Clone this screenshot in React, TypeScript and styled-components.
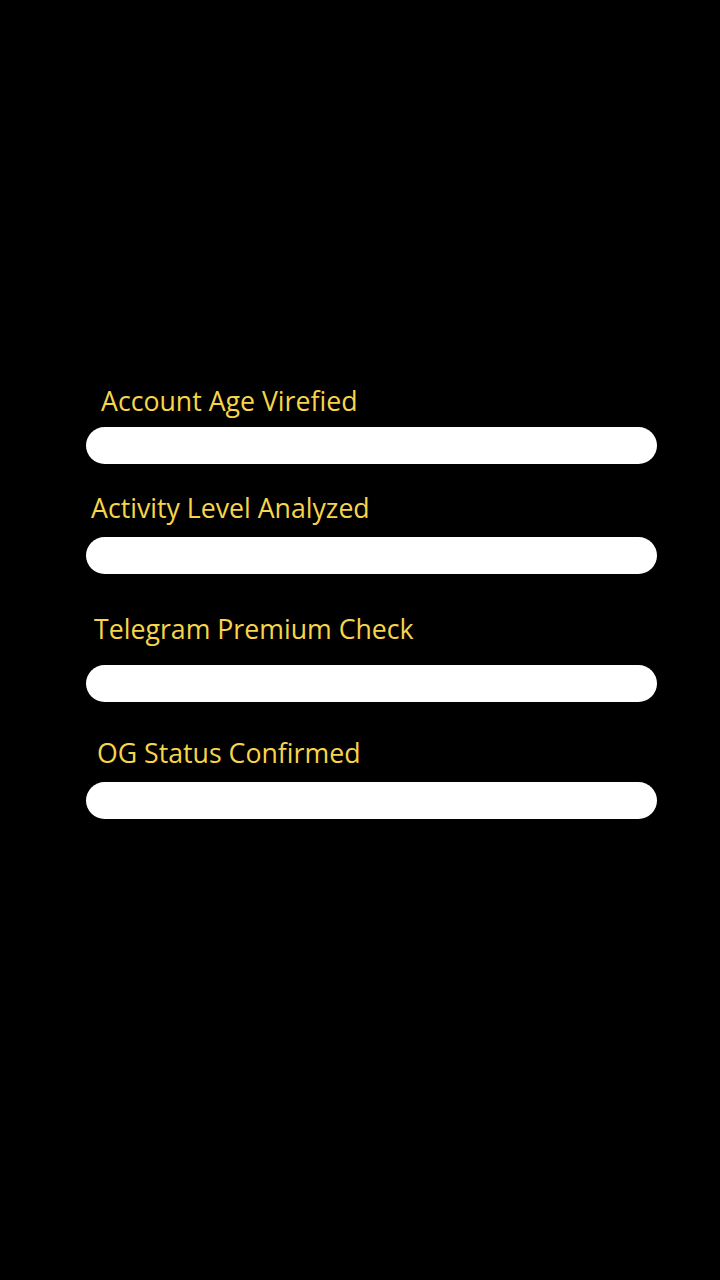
import React from "react";
import styled, { createGlobalStyle } from "styled-components";

const Global = createGlobalStyle`
  html, body { margin: 0; padding: 0; background: #000; }
  body { font-family: "Open Sans", "Noto Sans", sans-serif; }
`;

const Page = styled.div`
  width: 720px;
  height: 1280px;
  background: #000;
  display: flex;
  flex-direction: column;
  padding: 382px 63px 0 86px;
  box-sizing: border-box;
`;

const Step = styled.div<{ $top: number; $gap: number }>`
  display: flex;
  flex-direction: column;
  margin-top: ${(p) => p.$top}px;
  gap: ${(p) => p.$gap}px;
`;

const Label = styled.div<{ $indent: number }>`
  color: #f7d54a;
  font-size: 26.7px;
  line-height: 37px;
  padding-left: ${(p) => p.$indent}px;
`;

const Bar = styled.div`
  height: 37px;
  border-radius: 18.5px;
  background: #fff;
`;

const steps = [
  { label: "Account Age Virefied", indent: 15, top: 0, gap: 8 },
  { label: "Activity Level Analyzed", indent: 5, top: 25, gap: 11 },
  { label: "Telegram Premium Check", indent: 8, top: 36, gap: 18 },
  { label: "OG Status Confirmed", indent: 11, top: 32, gap: 11 },
];

export default function App() {
  return (
    <>
      <Global />
      <Page>
        {steps.map((s) => (
          <Step key={s.label} $top={s.top} $gap={s.gap}>
            <Label $indent={s.indent}>{s.label}</Label>
            <Bar />
          </Step>
        ))}
      </Page>
    </>
  );
}
